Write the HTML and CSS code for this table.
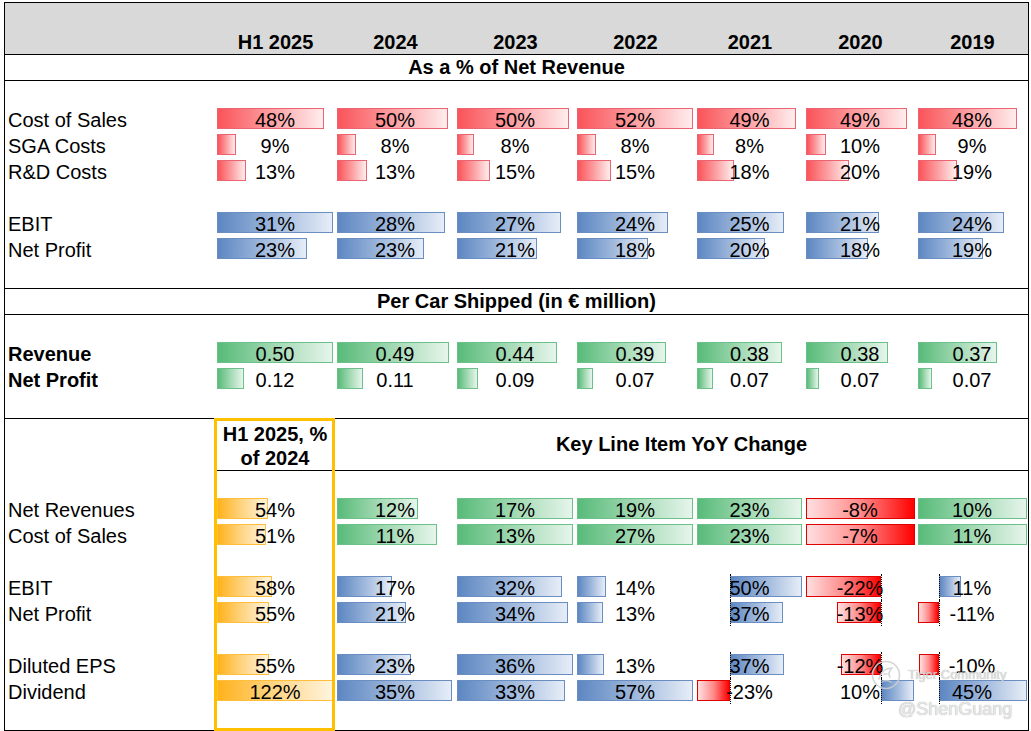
FILE: index.html
```html
<!DOCTYPE html>
<html lang="en">
<head>
<meta charset="utf-8">
<title>Financial summary</title>
<link rel="stylesheet" href="styles.css">
</head>
<body>
<div class="sheet">
  <div class="hdr grid">
    <div></div>
    <div class="h">H1 2025</div><div class="h">2024</div><div class="h">2023</div><div class="h">2022</div><div class="h">2021</div><div class="h">2020</div><div class="h">2019</div>
  </div>
  <div class="title">As a % of Net Revenue</div>

  <div class="sec s1">
    <div class="gap first"></div>
    <div class="row grid">
      <div class="lbl">Cost of Sales</div>
      <div class="c"><i class="bar r" style="width:107px"></i><span class="v">48%</span></div>
      <div class="c"><i class="bar r" style="width:111px"></i><span class="v">50%</span></div>
      <div class="c"><i class="bar r" style="width:112px"></i><span class="v">50%</span></div>
      <div class="c"><i class="bar r" style="width:116px"></i><span class="v">52%</span></div>
      <div class="c"><i class="bar r" style="width:99px"></i><span class="v">49%</span></div>
      <div class="c"><i class="bar r" style="width:101px"></i><span class="v">49%</span></div>
      <div class="c"><i class="bar r" style="width:99px"></i><span class="v">48%</span></div>
    </div>
    <div class="row grid">
      <div class="lbl">SGA Costs</div>
      <div class="c"><i class="bar r" style="width:19px"></i><span class="v">9%</span></div>
      <div class="c"><i class="bar r" style="width:19px"></i><span class="v">8%</span></div>
      <div class="c"><i class="bar r" style="width:17px"></i><span class="v">8%</span></div>
      <div class="c"><i class="bar r" style="width:19px"></i><span class="v">8%</span></div>
      <div class="c"><i class="bar r" style="width:17px"></i><span class="v">8%</span></div>
      <div class="c"><i class="bar r" style="width:20px"></i><span class="v">10%</span></div>
      <div class="c"><i class="bar r" style="width:18px"></i><span class="v">9%</span></div>
    </div>
    <div class="row grid">
      <div class="lbl">R&amp;D Costs</div>
      <div class="c"><i class="bar r" style="width:29px"></i><span class="v">13%</span></div>
      <div class="c"><i class="bar r" style="width:30px"></i><span class="v">13%</span></div>
      <div class="c"><i class="bar r" style="width:33px"></i><span class="v">15%</span></div>
      <div class="c"><i class="bar r" style="width:34px"></i><span class="v">15%</span></div>
      <div class="c"><i class="bar r" style="width:37px"></i><span class="v">18%</span></div>
      <div class="c"><i class="bar r" style="width:43px"></i><span class="v">20%</span></div>
      <div class="c"><i class="bar r" style="width:39px"></i><span class="v">19%</span></div>
    </div>
    <div class="gap"></div>
    <div class="row grid">
      <div class="lbl">EBIT</div>
      <div class="c"><i class="bar b" style="width:116px"></i><span class="v">31%</span></div>
      <div class="c"><i class="bar b" style="width:108px"></i><span class="v">28%</span></div>
      <div class="c"><i class="bar b" style="width:104px"></i><span class="v">27%</span></div>
      <div class="c"><i class="bar b" style="width:91px"></i><span class="v">24%</span></div>
      <div class="c"><i class="bar b" style="width:87px"></i><span class="v">25%</span></div>
      <div class="c"><i class="bar b" style="width:73px"></i><span class="v">21%</span></div>
      <div class="c"><i class="bar b" style="width:86px"></i><span class="v">24%</span></div>
    </div>
    <div class="row grid">
      <div class="lbl">Net Profit</div>
      <div class="c"><i class="bar b" style="width:90px"></i><span class="v">23%</span></div>
      <div class="c"><i class="bar b" style="width:87px"></i><span class="v">23%</span></div>
      <div class="c"><i class="bar b" style="width:80px"></i><span class="v">21%</span></div>
      <div class="c"><i class="bar b" style="width:71px"></i><span class="v">18%</span></div>
      <div class="c"><i class="bar b" style="width:68px"></i><span class="v">20%</span></div>
      <div class="c"><i class="bar b" style="width:62px"></i><span class="v">18%</span></div>
      <div class="c"><i class="bar b" style="width:65px"></i><span class="v">19%</span></div>
    </div>
    <div class="gap"></div>
  </div>

  <div class="title">Per Car Shipped (in € million)</div>

  <div class="sec s2">
    <div class="gap first"></div>
    <div class="row grid">
      <div class="lbl strong">Revenue</div>
      <div class="c"><i class="bar g" style="width:116px"></i><span class="v">0.50</span></div>
      <div class="c"><i class="bar g" style="width:112px"></i><span class="v">0.49</span></div>
      <div class="c"><i class="bar g" style="width:100px"></i><span class="v">0.44</span></div>
      <div class="c"><i class="bar g" style="width:89px"></i><span class="v">0.39</span></div>
      <div class="c"><i class="bar g" style="width:85px"></i><span class="v">0.38</span></div>
      <div class="c"><i class="bar g" style="width:82px"></i><span class="v">0.38</span></div>
      <div class="c"><i class="bar g" style="width:79px"></i><span class="v">0.37</span></div>
    </div>
    <div class="row grid">
      <div class="lbl strong">Net Profit</div>
      <div class="c"><i class="bar g" style="width:27px"></i><span class="v">0.12</span></div>
      <div class="c"><i class="bar g" style="width:26px"></i><span class="v">0.11</span></div>
      <div class="c"><i class="bar g" style="width:21px"></i><span class="v">0.09</span></div>
      <div class="c"><i class="bar g" style="width:16px"></i><span class="v">0.07</span></div>
      <div class="c"><i class="bar g" style="width:16px"></i><span class="v">0.07</span></div>
      <div class="c"><i class="bar g" style="width:13px"></i><span class="v">0.07</span></div>
      <div class="c"><i class="bar g" style="width:14px"></i><span class="v">0.07</span></div>
    </div>
    <div class="gap"></div>
  </div>

  <div class="hdr3 grid">
    <div></div>
    <div class="h3a">H1 2025, %<br>of 2024</div>
    <div class="h3b">Key Line Item YoY Change</div>
  </div>

  <div class="sec s3">
    <div class="gap first"></div>
    <div class="row grid">
      <div class="lbl">Net Revenues</div>
      <div class="c"><i class="bar o" style="width:51px"></i><span class="v">54%</span></div>
      <div class="c"><i class="bar g" style="width:81px"></i><span class="v">12%</span></div>
      <div class="c"><i class="bar g" style="width:116px"></i><span class="v">17%</span></div>
      <div class="c"><i class="bar g" style="width:116px"></i><span class="v">19%</span></div>
      <div class="c"><i class="bar g" style="width:105px"></i><span class="v">23%</span></div>
      <div class="c"><i class="bar n" style="width:109px"></i><span class="v">-8%</span></div>
      <div class="c"><i class="bar g" style="width:109px"></i><span class="v">10%</span></div>
    </div>
    <div class="row grid">
      <div class="lbl">Cost of Sales</div>
      <div class="c"><i class="bar o" style="width:49px"></i><span class="v">51%</span></div>
      <div class="c"><i class="bar g" style="width:100px"></i><span class="v">11%</span></div>
      <div class="c"><i class="bar g" style="width:116px"></i><span class="v">13%</span></div>
      <div class="c"><i class="bar g" style="width:116px"></i><span class="v">27%</span></div>
      <div class="c"><i class="bar g" style="width:105px"></i><span class="v">23%</span></div>
      <div class="c"><i class="bar n" style="width:109px"></i><span class="v">-7%</span></div>
      <div class="c"><i class="bar g" style="width:109px"></i><span class="v">11%</span></div>
    </div>
    <div class="gap"></div>
    <div class="row grid">
      <div class="lbl">EBIT</div>
      <div class="c"><i class="bar o" style="width:55px"></i><span class="v">58%</span></div>
      <div class="c"><i class="bar b" style="width:55px"></i><span class="v">17%</span></div>
      <div class="c"><i class="bar b" style="width:105px"></i><span class="v">32%</span></div>
      <div class="c"><i class="bar b" style="width:29px"></i><span class="v">14%</span></div>
      <div class="c"><i class="bar b" style="margin-left:35px;width:72px"></i><i class="axis" style="margin-left:35px"></i><span class="v">50%</span></div>
      <div class="c"><i class="bar n" style="width:75px"></i><i class="axis" style="margin-left:77px"></i><span class="v">-22%</span></div>
      <div class="c"><i class="bar b" style="margin-left:23px;width:22px"></i><i class="axis" style="margin-left:23px"></i><span class="v">11%</span></div>
    </div>
    <div class="row grid">
      <div class="lbl">Net Profit</div>
      <div class="c"><i class="bar o" style="width:52px"></i><span class="v">55%</span></div>
      <div class="c"><i class="bar b" style="width:69px"></i><span class="v">21%</span></div>
      <div class="c"><i class="bar b" style="width:111px"></i><span class="v">34%</span></div>
      <div class="c"><i class="bar b" style="width:26px"></i><span class="v">13%</span></div>
      <div class="c"><i class="bar b" style="margin-left:35px;width:53px"></i><i class="axis" style="margin-left:35px"></i><span class="v">37%</span></div>
      <div class="c"><i class="bar n" style="margin-left:33px;width:44px"></i><i class="axis" style="margin-left:77px"></i><span class="v">-13%</span></div>
      <div class="c"><i class="bar n" style="width:21px"></i><i class="axis" style="margin-left:23px"></i><span class="v">-11%</span></div>
    </div>
    <div class="gap"></div>
    <div class="row grid">
      <div class="lbl">Diluted EPS</div>
      <div class="c"><i class="bar o" style="width:52px"></i><span class="v">55%</span></div>
      <div class="c"><i class="bar b" style="width:74px"></i><span class="v">23%</span></div>
      <div class="c"><i class="bar b" style="width:116px"></i><span class="v">36%</span></div>
      <div class="c"><i class="bar b" style="width:27px"></i><span class="v">13%</span></div>
      <div class="c"><i class="bar b" style="margin-left:35px;width:54px"></i><i class="axis" style="margin-left:35px"></i><span class="v">37%</span></div>
      <div class="c"><i class="bar n" style="margin-left:37px;width:40px"></i><i class="axis" style="margin-left:77px"></i><span class="v">-12%</span></div>
      <div class="c"><i class="bar n" style="margin-left:3px;width:20px"></i><i class="axis" style="margin-left:23px"></i><span class="v">-10%</span></div>
    </div>
    <div class="row grid">
      <div class="lbl">Dividend</div>
      <div class="c"><i class="bar o" style="width:116px"></i><span class="v">122%</span></div>
      <div class="c"><i class="bar b" style="width:115px"></i><span class="v">35%</span></div>
      <div class="c"><i class="bar b" style="width:108px"></i><span class="v">33%</span></div>
      <div class="c"><i class="bar b" style="width:116px"></i><span class="v">57%</span></div>
      <div class="c"><i class="bar n" style="width:33px"></i><i class="axis" style="margin-left:35px"></i><span class="v">-23%</span></div>
      <div class="c"><i class="bar b" style="margin-left:77px;width:33px"></i><i class="axis" style="margin-left:77px"></i><span class="v">10%</span></div>
      <div class="c"><i class="bar b" style="margin-left:23px;width:88px"></i><i class="axis" style="margin-left:23px"></i><span class="v">45%</span></div>
    </div>
    <div class="gap"></div>
  </div>

  <div class="ybox"></div>

  <div class="wm">
    <div class="wm-top">
      <svg class="wm-logo" width="32" height="32" viewBox="0 0 32 32" aria-hidden="true">
        <circle cx="16" cy="16" r="13.5" fill="none" stroke="#cfcfcf" stroke-width="1.6"/>
        <path d="M9 20 C 11 13, 16 9, 22 9 C 19 12, 18 15, 20 18" fill="none" stroke="#cfcfcf" stroke-width="1.6" stroke-linecap="round"/>
        <path d="M12 23 C 15 21, 18 21, 21 23" fill="none" stroke="#cfcfcf" stroke-width="1.4" stroke-linecap="round"/>
        <path d="M14 15 L17 15" fill="none" stroke="#cfcfcf" stroke-width="1.4" stroke-linecap="round"/>
      </svg>
      <span class="wm-brand">Tiger Community</span>
    </div>
    <div class="wm-name">@ShenGuang</div>
  </div>
</div>
</body>
</html>
```

FILE: styles.css
```css
* {
  box-sizing: border-box;
  margin: 0;
  padding: 0;
}

html, body {
  background: #ffffff;
}

body {
  font-family: "Liberation Sans", Arial, sans-serif;
  font-size: 20px;
  color: #000;
}

.sheet {
  position: relative;
  margin: 2px 0 0 4px;
  width: 1025px;
  border: 1px solid #000;
}

.grid {
  display: grid;
  grid-template-columns: 210px 120px 120px 120px 120px 109px 112px 112px;
}

/* top header */
.hdr {
  height: 52px;
  background: #d9d9d9;
  border-bottom: 1px solid #000;
  align-items: end;
}

.h {
  font-weight: bold;
  text-align: center;
  line-height: 24px;
  padding-left: 1px;
}

.title {
  height: 26px;
  border-bottom: 1px solid #000;
  text-align: center;
  font-weight: bold;
  line-height: 25px;
}

.sec.s1,
.sec.s2 {
  border-bottom: 1px solid #000;
}

.gap {
  height: 26px;
}

.gap.first {
  height: 25px;
}

.row {
  height: 26px;
}

.lbl {
  padding: 2px 0 0 3px;
  line-height: 24px;
  white-space: nowrap;
}

.lbl.strong {
  font-weight: bold;
}

.c {
  display: grid;
  height: 26px;
}

.c > * {
  grid-area: 1 / 1;
}

.v {
  text-align: center;
  padding-top: 2px;
  line-height: 24px;
  white-space: nowrap;
}

.bar {
  display: block;
  justify-self: start;
  align-self: start;
  margin-top: 2px;
  margin-left: 2px;
  height: 21px;
  border: 1px solid;
}

.bar.r {
  border-color: #ec6472;
  background: linear-gradient(90deg, #fa5459 0%, #fc9ea1 50%, #ffeded 100%);
}

.bar.b {
  border-color: #6a8dc2;
  background: linear-gradient(90deg, #5d87c2 0%, #9fb8dc 50%, #e6edf7 100%);
}

.bar.g {
  border-color: #6cc08a;
  background: linear-gradient(90deg, #58bb79 0%, #a2d9b3 50%, #e6f5eb 100%);
}

.bar.o {
  border-color: #ffbe3c;
  background: linear-gradient(90deg, #ffb21c 0%, #ffd585 50%, #fff4de 100%);
}

.bar.n {
  border-color: #e00000;
  background: linear-gradient(90deg, #ffe0e0 0%, #ff8a8a 50%, #ff0000 100%);
}

.axis {
  display: block;
  justify-self: start;
  align-self: stretch;
  width: 0;
  border-left: 1px dotted #000;
}

/* third section header */
.hdr3 {
  height: 52px;
}

.h3a {
  border-bottom: 1px solid #000;
  font-weight: bold;
  text-align: center;
  line-height: 24px;
  padding-top: 3px;
}

.h3b {
  grid-column: 3 / 9;
  border-bottom: 1px solid #000;
  font-weight: bold;
  text-align: center;
  line-height: 51px;
}

.ybox {
  position: absolute;
  left: 209px;
  top: 415px;
  width: 121px;
  height: 313px;
  border: 3px solid #ffc000;
  pointer-events: none;
}

/* watermark */
.wm {
  position: absolute;
  left: 865px;
  top: 656px;
  pointer-events: none;
  opacity: 0.85;
}

.wm-top {
  display: flex;
  align-items: center;
  gap: 6px;
}

.wm-logo {
  display: block;
}

.wm-brand {
  font-size: 13px;
  line-height: 14px;
  color: #dcdcdc;
  text-shadow: 0 0 1px #9a9a9a;
  white-space: nowrap;
}

.wm-name {
  margin: 8px 0 0 28px;
  font-size: 18px;
  line-height: 20px;
  color: #e4e4e4;
  text-shadow: 0 0 1px #8f8f8f;
  white-space: nowrap;
}
```
